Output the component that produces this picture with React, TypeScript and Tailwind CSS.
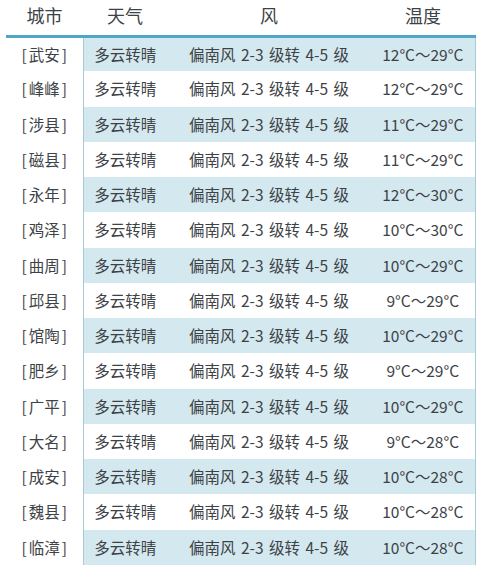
import React from "react";

const rows: [string, number, number][] = [
  ["武安", 12, 29],
  ["峰峰", 12, 29],
  ["涉县", 11, 29],
  ["磁县", 11, 29],
  ["永年", 12, 30],
  ["鸡泽", 10, 30],
  ["曲周", 10, 29],
  ["邱县", 9, 29],
  ["馆陶", 10, 29],
  ["肥乡", 9, 29],
  ["广平", 10, 29],
  ["大名", 9, 28],
  ["成安", 10, 28],
  ["魏县", 10, 28],
  ["临漳", 10, 28],
];

export default function App() {
  return (
    <div
      className="w-[500px] h-[578px] bg-white pl-[6px] text-[#3d4246]"
      style={{ fontFamily: '"Noto Sans CJK SC", "Noto Sans", sans-serif' }}
    >
      <table className="border-collapse table-fixed w-[469px]">
        <colgroup>
          <col className="w-[77px]" />
          <col className="w-[84px]" />
          <col className="w-[204px]" />
          <col className="w-[104px]" />
        </colgroup>
        <thead>
          <tr className="h-[36px] border-b-[3px] border-[#4fa6c6] text-[18px]">
            <th className="font-normal text-center pb-[3px]">城市</th>
            <th className="font-normal text-center pb-[3px]">天气</th>
            <th className="font-normal text-center pb-[3px]">风</th>
            <th className="font-normal text-center pb-[3px]">温度</th>
          </tr>
        </thead>
        <tbody className="text-[15.5px]">
          {rows.map(([city, lo, hi], i) => {
            const bg = i % 2 === 0 ? "bg-[#d4e8ef]" : "bg-white";
            return (
              <tr key={city} className="h-[35.27px]">
                <td className="text-center bg-white border-r border-[#a8cbd8]">
                  [<span className="mx-[2px]">{city}</span>]
                </td>
                <td className={`text-center ${bg}`}>多云转晴</td>
                <td className={`text-center ${bg} [word-spacing:2px]`}>偏南风 2-3 级转 4-5 级</td>
                <td className={`text-center ${bg} border-r border-[#a8cbd8]`}>
                  {lo}°C～{hi}°C
                </td>
              </tr>
            );
          })}
        </tbody>
      </table>
    </div>
  );
}
